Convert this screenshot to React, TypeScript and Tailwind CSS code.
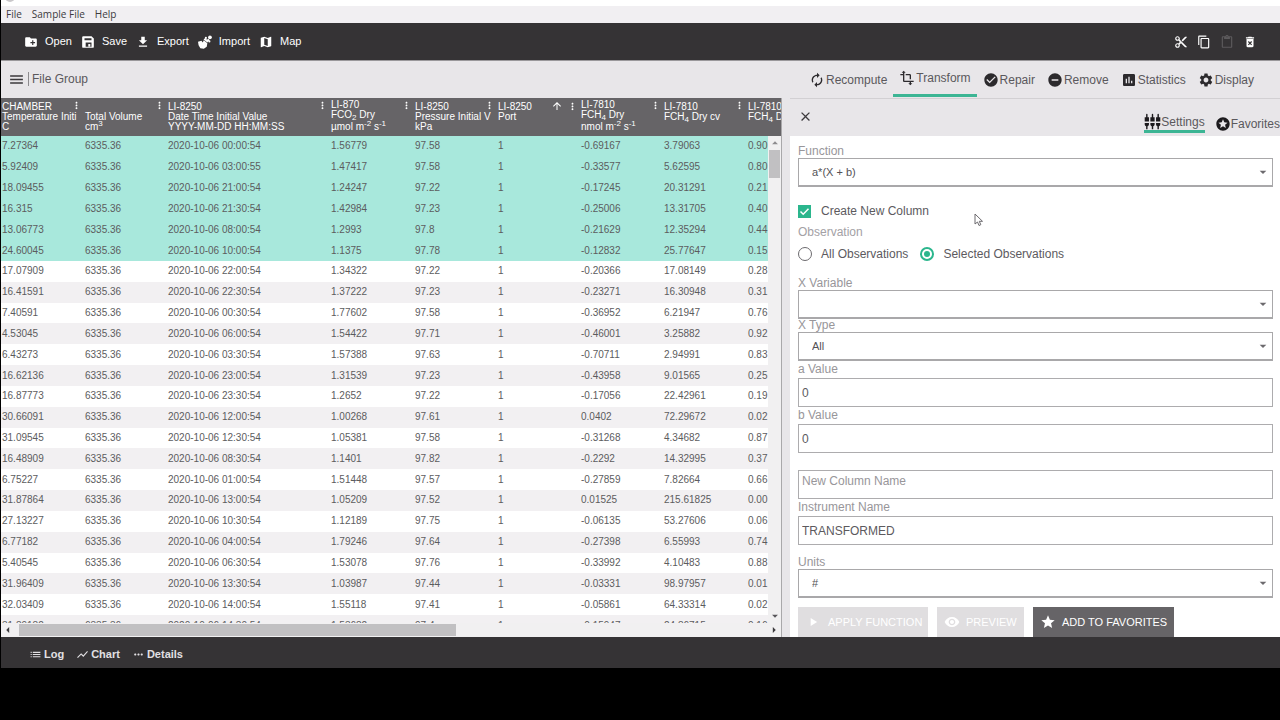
import { useState } from "react";
import type { ReactNode } from "react";
import type { IconType } from "react-icons";
import {
  MdArrowDropDown,
  MdArrowDropUp,
  MdArrowLeft,
  MdArrowRight,
  MdArrowUpward,
  MdAssessment,
  MdAutorenew,
  MdCheckCircle,
  MdClose,
  MdContentCopy,
  MdContentCut,
  MdContentPaste,
  MdCreateNewFolder,
  MdDeleteForever,
  MdFileDownload,
  MdList,
  MdMap,
  MdMenu,
  MdMoreHoriz,
  MdMoreVert,
  MdPlayArrow,
  MdRemoveCircle,
  MdSettings,
  MdSettingsInputComponent,
  MdShowChart,
  MdStar,
  MdStars,
  MdTransform,
  MdVisibility,
} from "react-icons/md";

const menuItems = ["File", "Sample File", "Help"];

function SaveIcon({ className }: { className?: string }) {
  return (
    <svg viewBox="0 0 24 24" fill="currentColor" fillRule="evenodd" className={className} aria-hidden="true">
      <path d="M4 2h14l4 4v14a2 2 0 0 1-2 2H4a2 2 0 0 1-2-2V4a2 2 0 0 1 2-2zM6 5.500v3.500h12V5.500zM8 13v7h10v-7z" />
      <path d="M12.500 15.500h3.500V20h-3.500z" />
    </svg>
  );
}

function ImportIcon({ className }: { className?: string }) {
  return (
    <svg viewBox="0 0 24 24" fill="currentColor" className={className} aria-hidden="true">
      <path d="M0 11.500 6 10l2 3 2-4 6 5-1 6-5 3.500-6-1-3-5z" />
      <path d="m9.500 7.500 3-2.500 3 3 2-2 2.500 3-4 4z" />
      <circle cx="20.500" cy="4" r="3.200" />
      <circle cx="13.500" cy="5" r="1.800" />
      <circle cx="19.500" cy="11" r="1.800" />
    </svg>
  );
}

const fileActions = [
  { icon: MdCreateNewFolder, label: "Open" },
  { icon: SaveIcon, label: "Save" },
  { icon: MdFileDownload, label: "Export" },
  { icon: ImportIcon, label: "Import" },
  { icon: MdMap, label: "Map" },
];

const editActions = [
  { icon: MdContentCut, label: "Cut", disabled: false },
  { icon: MdContentCopy, label: "Copy", disabled: false },
  { icon: MdContentPaste, label: "Paste", disabled: true },
  { icon: MdDeleteForever, label: "Delete", disabled: false },
];

const tabs: { icon: IconType; label: string }[] = [
  { icon: MdAutorenew, label: "Recompute" },
  { icon: MdTransform, label: "Transform" },
  { icon: MdCheckCircle, label: "Repair" },
  { icon: MdRemoveCircle, label: "Remove" },
  { icon: MdAssessment, label: "Statistics" },
  { icon: MdSettings, label: "Display" },
];

const footerItems = [
  { icon: MdList, label: "Log" },
  { icon: MdShowChart, label: "Chart" },
  { icon: MdMoreHoriz, label: "Details" },
];

type Column = {
  key: string;
  width: string;
  instrument?: string;
  name: ReactNode;
  unit?: ReactNode;
  tall?: boolean;
  sorted?: boolean;
};

const columns: Column[] = [
  { key: "temp", width: "w-[83px]", instrument: "CHAMBER", name: "Temperature Initi", unit: "C" },
  { key: "volume", width: "w-[83px]", name: "Total Volume", unit: <>cm<Sup>3</Sup></> },
  { key: "date", width: "w-[163px]", instrument: "LI-8250", name: "Date Time Initial Value", unit: "YYYY-MM-DD HH:MM:SS" },
  { key: "co2", width: "w-[84px]", instrument: "LI-870", name: <>FCO<Sub>2</Sub> Dry</>, unit: <>µmol m<Sup>-2</Sup> s<Sup>-1</Sup></>, tall: true },
  { key: "pressure", width: "w-[83px]", instrument: "LI-8250", name: "Pressure Initial V", unit: "kPa" },
  { key: "port", width: "w-[83px]", instrument: "LI-8250", name: "Port", sorted: true },
  { key: "ch4", width: "w-[83px]", instrument: "LI-7810", name: <>FCH<Sub>4</Sub> Dry</>, unit: <>nmol m<Sup>-2</Sup> s<Sup>-1</Sup></>, tall: true },
  { key: "ch4cv", width: "w-[84px]", instrument: "LI-7810", name: <>FCH<Sub>4</Sub> Dry cv</> },
  { key: "ch4r2", width: "w-[83px]", instrument: "LI-7810", name: <>FCH<Sub>4</Sub> D</> },
];

const SELECTED_ROWS = 6;

const rows = [
  ["7.27364", "6335.36", "2020-10-06 00:00:54", "1.56779", "97.58", "1", "-0.69167", "3.79063", "0.90"],
  ["5.92409", "6335.36", "2020-10-06 03:00:55", "1.47417", "97.58", "1", "-0.33577", "5.62595", "0.80"],
  ["18.09455", "6335.36", "2020-10-06 21:00:54", "1.24247", "97.22", "1", "-0.17245", "20.31291", "0.21"],
  ["16.315", "6335.36", "2020-10-06 21:30:54", "1.42984", "97.23", "1", "-0.25006", "13.31705", "0.40"],
  ["13.06773", "6335.36", "2020-10-06 08:00:54", "1.2993", "97.8", "1", "-0.21629", "12.35294", "0.44"],
  ["24.60045", "6335.36", "2020-10-06 10:00:54", "1.1375", "97.78", "1", "-0.12832", "25.77647", "0.15"],
  ["17.07909", "6335.36", "2020-10-06 22:00:54", "1.34322", "97.22", "1", "-0.20366", "17.08149", "0.28"],
  ["16.41591", "6335.36", "2020-10-06 22:30:54", "1.37222", "97.23", "1", "-0.23271", "16.30948", "0.31"],
  ["7.40591", "6335.36", "2020-10-06 00:30:54", "1.77602", "97.58", "1", "-0.36952", "6.21947", "0.76"],
  ["4.53045", "6335.36", "2020-10-06 06:00:54", "1.54422", "97.71", "1", "-0.46001", "3.25882", "0.92"],
  ["6.43273", "6335.36", "2020-10-06 03:30:54", "1.57388", "97.63", "1", "-0.70711", "2.94991", "0.83"],
  ["16.62136", "6335.36", "2020-10-06 23:00:54", "1.31539", "97.23", "1", "-0.43958", "9.01565", "0.25"],
  ["16.87773", "6335.36", "2020-10-06 23:30:54", "1.2652", "97.22", "1", "-0.17056", "22.42961", "0.19"],
  ["30.66091", "6335.36", "2020-10-06 12:00:54", "1.00268", "97.61", "1", "0.0402", "72.29672", "0.02"],
  ["31.09545", "6335.36", "2020-10-06 12:30:54", "1.05381", "97.58", "1", "-0.31268", "4.34682", "0.87"],
  ["16.48909", "6335.36", "2020-10-06 08:30:54", "1.1401", "97.82", "1", "-0.2292", "14.32995", "0.37"],
  ["6.75227", "6335.36", "2020-10-06 01:00:54", "1.51448", "97.57", "1", "-0.27859", "7.82664", "0.66"],
  ["31.87864", "6335.36", "2020-10-06 13:00:54", "1.05209", "97.52", "1", "0.01525", "215.61825", "0.00"],
  ["27.13227", "6335.36", "2020-10-06 10:30:54", "1.12189", "97.75", "1", "-0.06135", "53.27606", "0.06"],
  ["6.77182", "6335.36", "2020-10-06 04:00:54", "1.79246", "97.64", "1", "-0.27398", "6.55993", "0.74"],
  ["5.40545", "6335.36", "2020-10-06 06:30:54", "1.53078", "97.76", "1", "-0.33992", "4.10483", "0.88"],
  ["31.96409", "6335.36", "2020-10-06 13:30:54", "1.03987", "97.44", "1", "-0.03331", "98.97957", "0.01"],
  ["32.03409", "6335.36", "2020-10-06 14:00:54", "1.55118", "97.41", "1", "-0.05861", "64.33314", "0.02"],
  ["31.89182", "6335.36", "2020-10-06 14:30:54", "1.53682", "97.4", "1", "-0.15947", "24.86715", "0.16"],
];

function Sup({ children }: { children: ReactNode }) {
  return <sup className="text-[8px] leading-none">{children}</sup>;
}

function Sub({ children }: { children: ReactNode }) {
  return <sub className="text-[8px] leading-none">{children}</sub>;
}

function rowColor(i: number) {
  if (i < SELECTED_ROWS) return "bg-[#a8e8dc]";
  return i % 2 ? "bg-[#f2f0f2]" : "bg-white";
}

function HeadCell({ column }: { column: Column }) {
  const { width, instrument, name, unit, tall, sorted } = column;
  return (
    <th className={`${width} h-[38px] p-0 align-top font-normal`}>
      <div className="relative h-[38px] whitespace-nowrap pl-px leading-[10px]">
        <div className={tall ? "pt-0.5" : "pt-1"}>
          <div className="h-[10px]">{instrument}</div>
          <div className="h-[10px]">{name}</div>
          <div className={tall ? "h-[14px] leading-[14px]" : "h-[10px]"}>{unit}</div>
        </div>
        <div className="absolute right-0.5 top-0.5 flex items-center gap-1">
          {sorted && <MdArrowUpward className="size-3" />}
          <MdMoreVert className="size-[11px]" />
        </div>
      </div>
    </th>
  );
}

function DataGrid() {
  return (
    <div className="flex min-w-0 flex-1 flex-col">
      <div className="relative min-h-0 flex-1 basis-0 overflow-hidden bg-[#666467]">
        <table className="h-[538px] w-[829px] table-fixed border-collapse text-left text-[10px]">
          <thead>
            <tr className="h-[38px] bg-[#666467] text-white">
              {columns.map((column) => (
                <HeadCell key={column.key} column={column} />
              ))}
            </tr>
          </thead>
          <tbody className="text-[#5c5c5e]">
            {rows.map((row, i) => (
              <tr key={row[2]} className={rowColor(i)}>
                {row.map((cell, j) => (
                  <td key={columns[j].key} className="py-0 pl-px pr-0 leading-4">
                    {cell}
                  </td>
                ))}
              </tr>
            ))}
          </tbody>
        </table>

        {/* vertical scrollbar */}
        <div className="absolute bottom-0 right-0 top-[38px] flex w-[13px] flex-col items-center justify-between bg-[#f1f0f1] text-[#58565a]">
          <div className="flex w-full flex-col items-center">
            <MdArrowDropUp className="size-[14px] text-[#8d8b8e]" />
            <div className="h-7 w-[11px] bg-[#c1c0c2]" />
          </div>
          <MdArrowDropDown className="size-[14px]" />
        </div>
      </div>

      {/* horizontal scrollbar */}
      <div className="flex h-[14px] items-center justify-between bg-[#f1f0f1] text-[#3c3a3d]">
        <div className="flex flex-1 items-center">
          <MdArrowLeft className="mr-1 size-[14px]" />
          <div className="h-3 w-[57%] bg-[#c1c0c2]" />
        </div>
        <MdArrowRight className="size-[14px]" />
      </div>
    </div>
  );
}

function SelectField({ id, label, options, className }: { id: string; label: string; options: string[]; className?: string }) {
  return (
    <div className={className}>
      <label htmlFor={id} className="block leading-[13px] text-[#98969a]">
        {label}
      </label>
      <div className="relative">
        <select
          id={id}
          className="block h-[29px] w-full appearance-none border border-b-2 border-[#a9a8aa] bg-white pl-[13px] text-[11px] text-[#545256]"
        >
          {options.map((o) => (
            <option key={o}>{o}</option>
          ))}
        </select>
        <MdArrowDropDown className="pointer-events-none absolute right-0.5 top-1.5 size-4 text-[#6c6a6e]" />
      </div>
    </div>
  );
}

function TextField({ id, label, value }: { id: string; label: string; value: string }) {
  return (
    <div>
      <label htmlFor={id} className="block leading-[17px] text-[#98969a]">
        {label}
      </label>
      <input
        id={id}
        defaultValue={value}
        className="block h-[29px] w-full border border-[#adacae] bg-white px-[3px] text-[#5c5a5e]"
      />
    </div>
  );
}

function TransformPanel() {
  const [newColumn, setNewColumn] = useState(true);
  const [scope, setScope] = useState("selected");

  return (
    <aside className="w-[490px] shrink-0 overflow-hidden bg-white text-xs">
      <div className="flex h-[38px] items-end justify-between border-t border-[#d2d0d3] bg-[#e8e6e9] pl-2">
        <button aria-label="Close" className="mb-3 text-[#3c3a3d]">
          <MdClose className="size-[15px]" />
        </button>
        <div className="flex items-end gap-[10px] whitespace-nowrap text-[#5a585c]">
          <button className="mb-[3px] flex items-center border-b-[3px] border-[#3cb594]">
            <MdSettingsInputComponent className="size-[17px] text-[#1c1a1d]" />
            Settings
          </button>
          <button className="mb-1 flex items-center">
            <MdStars className="size-4 text-[#1c1a1d]" />
            Favorites
          </button>
        </div>
      </div>

      <form className="pl-2 pr-[7px] pt-[9px]" onSubmit={(e) => e.preventDefault()}>
        <SelectField id="function" label="Function" options={["a*(X + b)"]} />

        <div className="relative mt-4">
          <label className="flex h-4 items-center gap-[10px] text-[#5c5a5e]">
            <span className="relative flex">
              <input
                type="checkbox"
                checked={newColumn}
                onChange={(e) => setNewColumn(e.target.checked)}
                className="peer size-[13px] appearance-none border border-[#8d8b8e] checked:border-[#2bb68d] checked:bg-[#2bb68d]"
              />
              <svg viewBox="0 0 13 13" className="pointer-events-none absolute inset-0 hidden size-[13px] peer-checked:block">
                <path d="M2.500 6.500 5.200 9.200 10.500 3.800" fill="none" stroke="white" strokeWidth="1.500" />
              </svg>
            </span>
            Create New Column
          </label>
          {/* mouse pointer */}
          <svg viewBox="0 0 10 14" className="pointer-events-none absolute left-[176px] top-[10px] h-[14px] w-[10px]">
            <path d="M1 1v10l2.500-2 1.500 3.500 1.800-.8L5.300 8.300h3.200z" fill="white" stroke="#6c6a6e" />
          </svg>
        </div>

        <fieldset>
          <legend className="pt-[5px] leading-4 text-[#a3a1a5]">Observation</legend>
          <div className="mt-1.5 flex h-4 items-center gap-3 text-[#5c5a5e]">
            {[
              { id: "all", label: "All Observations" },
              { id: "selected", label: "Selected Observations" },
            ].map(({ id, label }) => (
              <label key={id} className="flex items-center gap-[9px]">
                <input
                  type="radio"
                  name="scope"
                  checked={scope === id}
                  onChange={() => setScope(id)}
                  className="size-[14px] appearance-none rounded-full border border-[#6c6a6e] checked:border-2 checked:border-[#2bb68d] checked:bg-[#2bb68d] checked:bg-clip-content checked:p-0.5"
                />
                {label}
              </label>
            ))}
          </div>
        </fieldset>

        <SelectField id="x-variable" label="X Variable" options={[""]} className="mt-[15px]" />
        <SelectField id="x-type" label="X Type" options={["All"]} />
        <TextField id="a-value" label="a Value" value="0" />
        <TextField id="b-value" label="b Value" value="0" />
        <input
          aria-label="New Column Name"
          placeholder="New Column Name"
          className="mt-[17px] block h-[29px] w-full border border-[#adacae] bg-white px-[3px] pb-2 placeholder:text-[#98969a]"
        />
        <TextField id="instrument" label="Instrument Name" value="TRANSFORMED" />
        <SelectField id="units" label="Units" options={["#"]} className="mt-[11px]" />

        <div className="mt-[9px] flex gap-[9px] text-[11px] text-white">
          <button disabled className="flex h-[30px] w-[130px] items-center gap-2 bg-[#e0dee0] pl-2">
            <MdPlayArrow className="size-[14px]" />
            APPLY FUNCTION
          </button>
          <button disabled className="flex h-[30px] w-[87px] items-center gap-1.5 bg-[#e0dee0] pl-[7px]">
            <MdVisibility className="size-4" />
            PREVIEW
          </button>
          <button className="flex h-[30px] w-[141px] items-center gap-1.5 bg-[#666467] pl-[7px]">
            <MdStar className="size-4" />
            ADD TO FAVORITES
          </button>
        </div>
      </form>
    </aside>
  );
}

export default function App() {
  return (
    <div className="min-h-screen overflow-hidden border-l border-black bg-black font-['Liberation_Sans',Arial,sans-serif]">
      <div className="h-1.5 overflow-hidden bg-white pl-1">
        <div className="-mt-2 size-[10px] rounded-full bg-[#c9c7ca]" />
      </div>
      <nav className="flex h-[17px] items-center gap-[10px] bg-[#f1eff2] pl-[5px] font-['Open_Sans',sans-serif] text-[10px] text-[#3c3a3d]">
        {menuItems.map((item) => (
          <button key={item}>{item}</button>
        ))}
      </nav>

      {/* Main toolbar */}
      <header className="flex h-[38px] items-center justify-between border-b border-[#9a989b] bg-[#353335] pl-[23px] pr-[23px] text-[11px] text-white">
        <div className="flex items-center gap-[9px]">
          {fileActions.map(({ icon: Icon, label }) => (
            <button key={label} className="flex items-center gap-[7px]">
              <Icon className="size-[14px]" />
              {label}
            </button>
          ))}
        </div>
        <div className="flex items-center gap-[9px]">
          {editActions.map(({ icon: Icon, label, disabled }) => (
            <button key={label} aria-label={label} disabled={disabled} className="disabled:text-[#5c5a5c]">
              <Icon className="size-[14px]" />
            </button>
          ))}
        </div>
      </header>

      <div className="flex h-[37px] items-stretch justify-between bg-[#e8e6e9] pb-px pl-[7px] pr-5 text-xs text-[#5a585c]">
        <div className="flex items-center">
          <button aria-label="Menu">
            <MdMenu className="size-[17px] text-[#3c3a3d]" />
          </button>
          <div className="mx-[3px] h-[14px] w-px bg-[#8d8b8e]" />
          File Group
        </div>
        <div className="flex">
          {tabs.map(({ icon: Icon, label }) => (
            <button
              key={label}
              className={
                label === "Transform"
                  ? "flex items-center border-b-[3px] border-[#3cb594] px-1.5"
                  : "flex items-center px-1.5 pt-0.5"
              }
            >
              <Icon className="mr-px size-4 text-[#2c2a2d]" />
              {label}
            </button>
          ))}
        </div>
      </div>

      <main className="flex items-stretch bg-[#e8e6e9]">
        <DataGrid />
        <div className="w-[9px] shrink-0 border-l border-[#a9a8aa]" />
        <TransformPanel />
      </main>

      <footer className="flex h-[31px] items-center gap-3 bg-[#353335] pl-7 pt-1 text-[11px] font-bold text-[#e2e0e3]">
        {footerItems.map(({ icon: Icon, label }) => (
          <button key={label} className="flex items-center gap-0.5">
            <Icon className="size-[13px]" />
            {label}
          </button>
        ))}
      </footer>
    </div>
  );
}
